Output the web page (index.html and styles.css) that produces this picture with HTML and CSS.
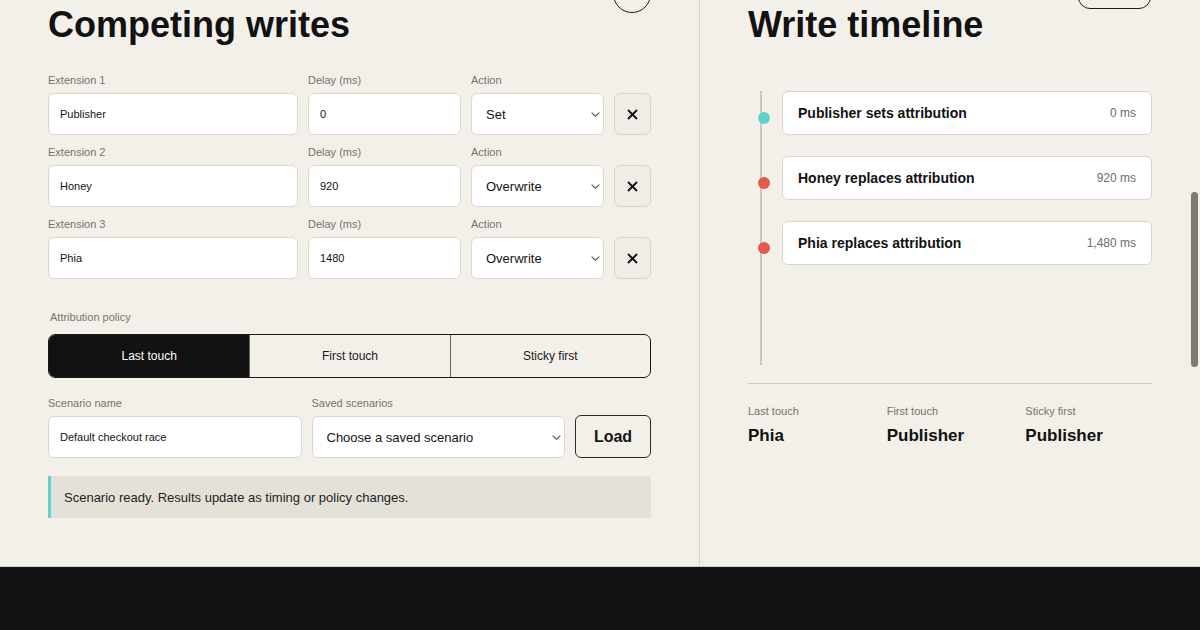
FILE: index.html
```html
<!DOCTYPE html>
<html lang="en">
<head>
<meta charset="utf-8">
<title>Competing writes</title>
<link rel="stylesheet" href="styles.css">
</head>
<body>
<main class="layout">
  <section class="panel panel--editor">
    <div class="panel-head">
      <h2 class="panel-title">Competing writes</h2>
      <button class="icon-btn" aria-label="Add extension">
        <svg width="14" height="14" viewBox="0 0 14 14"><path d="M7 1v12M1 7h12" stroke="#111" stroke-width="1.4" fill="none"/></svg>
      </button>
    </div>

    <div class="writes">
      <div class="write-row">
        <div class="field"><label>Extension 1</label><input class="input" value="Publisher"></div>
        <div class="field"><label>Delay (ms)</label><input class="input" value="0"></div>
        <div class="field"><label>Action</label>
          <div class="select-wrap">
            <select class="select"><option>Set</option><option>Overwrite</option></select>
            <svg class="chev" width="9" height="5" viewBox="0 0 9 5"><path d="M0.6 0.6l3.9 3.6 3.9-3.6" stroke="#555" stroke-width="1.1" fill="none"/></svg>
          </div>
        </div>
        <button class="remove-btn" aria-label="Remove">
          <svg width="11" height="11" viewBox="0 0 11 11"><path d="M1 1l9 9M10 1l-9 9" stroke="#111" stroke-width="1.9" fill="none"/></svg>
        </button>
      </div>

      <div class="write-row">
        <div class="field"><label>Extension 2</label><input class="input" value="Honey"></div>
        <div class="field"><label>Delay (ms)</label><input class="input" value="920"></div>
        <div class="field"><label>Action</label>
          <div class="select-wrap">
            <select class="select"><option>Overwrite</option><option>Set</option></select>
            <svg class="chev" width="9" height="5" viewBox="0 0 9 5"><path d="M0.6 0.6l3.9 3.6 3.9-3.6" stroke="#555" stroke-width="1.1" fill="none"/></svg>
          </div>
        </div>
        <button class="remove-btn" aria-label="Remove">
          <svg width="11" height="11" viewBox="0 0 11 11"><path d="M1 1l9 9M10 1l-9 9" stroke="#111" stroke-width="1.9" fill="none"/></svg>
        </button>
      </div>

      <div class="write-row">
        <div class="field"><label>Extension 3</label><input class="input" value="Phia"></div>
        <div class="field"><label>Delay (ms)</label><input class="input" value="1480"></div>
        <div class="field"><label>Action</label>
          <div class="select-wrap">
            <select class="select"><option>Overwrite</option><option>Set</option></select>
            <svg class="chev" width="9" height="5" viewBox="0 0 9 5"><path d="M0.6 0.6l3.9 3.6 3.9-3.6" stroke="#555" stroke-width="1.1" fill="none"/></svg>
          </div>
        </div>
        <button class="remove-btn" aria-label="Remove">
          <svg width="11" height="11" viewBox="0 0 11 11"><path d="M1 1l9 9M10 1l-9 9" stroke="#111" stroke-width="1.9" fill="none"/></svg>
        </button>
      </div>
    </div>

    <div class="policy" role="radiogroup" aria-label="Attribution policy">
      <div class="policy-label">Attribution policy</div>
      <div class="segmented">
        <button class="seg is-active">Last touch</button>
        <button class="seg">First touch</button>
        <button class="seg">Sticky first</button>
      </div>
    </div>

    <div class="scenario-row">
      <div class="field"><label>Scenario name</label><input class="input" value="Default checkout race"></div>
      <div class="field"><label>Saved scenarios</label>
        <div class="select-wrap">
          <select class="select"><option>Choose a saved scenario</option></select>
          <svg class="chev" width="9" height="5" viewBox="0 0 9 5"><path d="M0.6 0.6l3.9 3.6 3.9-3.6" stroke="#555" stroke-width="1.1" fill="none"/></svg>
        </div>
      </div>
      <button class="load-btn">Load</button>
    </div>

    <div class="status">Scenario ready. Results update as timing or policy changes.</div>
  </section>

  <section class="panel panel--timeline">
    <div class="panel-head">
      <h2 class="panel-title">Write timeline</h2>
      <button class="ghost-btn" aria-label="Replay"></button>
    </div>

    <div class="timeline">
      <div class="event">
        <span class="dot dot--set"></span>
        <div class="card"><span class="card-title">Publisher sets attribution</span><span class="card-time">0 ms</span></div>
      </div>
      <div class="event">
        <span class="dot dot--replace"></span>
        <div class="card"><span class="card-title">Honey replaces attribution</span><span class="card-time">920 ms</span></div>
      </div>
      <div class="event">
        <span class="dot dot--replace"></span>
        <div class="card"><span class="card-title">Phia replaces attribution</span><span class="card-time">1,480 ms</span></div>
      </div>
    </div>

    <div class="results">
      <div class="result"><div class="result-label">Last touch</div><div class="result-value">Phia</div></div>
      <div class="result"><div class="result-label">First touch</div><div class="result-value">Publisher</div></div>
      <div class="result"><div class="result-label">Sticky first</div><div class="result-value">Publisher</div></div>
    </div>
  </section>
</main>
<footer class="footer"></footer>
<div class="scroll-thumb"></div>
</body>
</html>
```

FILE: styles.css
```css
* { box-sizing: border-box; }

html, body {
  margin: 0;
  height: 100%;
}

body {
  background: #f3f0ea;
  color: #141414;
  font-family: "Liberation Sans", Arial, Helvetica, sans-serif;
  overflow: hidden;
}

button, input, select {
  font-family: inherit;
  color: inherit;
}

.layout {
  display: grid;
  grid-template-columns: 700px 500px;
  margin-top: -25px;
  border-bottom: 1px solid #d2cec6;
}

.panel {
  padding: 0 48px 48px;
}

.panel--editor {
  border-right: 1px solid #d8d3cb;
}

.panel-head {
  display: flex;
  justify-content: space-between;
  align-items: flex-start;
}

.panel-title {
  margin: 30px 0 0;
  font-size: 36px;
  line-height: 40px;
  font-weight: 700;
  color: #121212;
}

.icon-btn {
  width: 38px;
  height: 38px;
  border: 1px solid #1a1a1a;
  border-radius: 50%;
  background: transparent;
  padding: 0;
  display: flex;
  align-items: center;
  justify-content: center;
}

.ghost-btn {
  width: 73px;
  height: 34px;
  border: 1px solid #1a1a1a;
  border-radius: 12px;
  background: transparent;
  margin-right: 1px;
}

/* write rows */
.writes {
  margin-top: 28px;
  display: flex;
  flex-direction: column;
  gap: 10px;
}

.write-row {
  display: grid;
  grid-template-columns: 250px 153px 133px 37px;
  column-gap: 10px;
  align-items: end;
}

.field label {
  display: block;
  font-size: 11px;
  line-height: 14px;
  color: #77736c;
  margin-bottom: 6px;
}

.input {
  display: block;
  width: 100%;
  height: 42px;
  border: 1px solid #dcd8d0;
  border-radius: 6px;
  background: #fff;
  padding: 0 11px;
  font-size: 11px;
  color: #141414;
  outline: none;
}

.select-wrap {
  position: relative;
}

.select {
  display: block;
  width: 100%;
  height: 42px;
  appearance: none;
  -webkit-appearance: none;
  border: 1px solid #dcd8d0;
  border-radius: 6px;
  background: #fff;
  padding: 0 14px;
  font-size: 13px;
  color: #141414;
  outline: none;
}

.chev {
  position: absolute;
  right: 4px;
  top: 19px;
  pointer-events: none;
}

.remove-btn {
  height: 42px;
  width: 37px;
  padding: 0;
  border: 1px solid #d8d4cc;
  border-radius: 6px;
  background: #f0ede7;
  display: flex;
  align-items: center;
  justify-content: center;
}

/* policy */
.policy {
  margin-top: 31px;
}

.policy-label {
  font-size: 11px;
  line-height: 14px;
  color: #77736c;
  padding-left: 2px;
  margin-bottom: 10px;
}

.segmented {
  display: grid;
  grid-template-columns: repeat(3, 1fr);
  height: 44px;
  border: 1px solid #1a1a1a;
  border-radius: 7px;
  overflow: hidden;
}

.seg {
  border: 0;
  border-left: 1px solid #6b6761;
  background: transparent;
  font-size: 12px;
  color: #1a1a1a;
  padding: 0;
}

.seg:first-child {
  border-left: 0;
}

.seg.is-active {
  background: #121212;
  color: #fff;
}

/* scenario */
.scenario-row {
  margin-top: 18px;
  display: grid;
  grid-template-columns: 1fr 1fr 76px;
  column-gap: 10px;
  align-items: end;
}

.load-btn {
  height: 43px;
  border: 1.5px solid #2b2b2b;
  border-radius: 6px;
  background: transparent;
  font-weight: 700;
  font-size: 16px;
  color: #141414;
}

.status {
  margin-top: 18px;
  height: 42px;
  background: #e4e1d9;
  border-left: 3px solid #5fd3cb;
  padding-left: 13px;
  display: flex;
  align-items: center;
  font-size: 13px;
  color: #1e1e1e;
}

/* timeline */
.timeline {
  margin: 46px 0 0 12px;
  height: 274px;
  border-left: 2px solid #cdc8bf;
  padding-left: 20px;
  display: flex;
  flex-direction: column;
  gap: 21px;
  border-bottom: 0;
}

.event {
  display: flex;
  align-items: flex-start;
}

.dot {
  flex: none;
  width: 12px;
  height: 12px;
  border-radius: 50%;
  margin: 21px 12px 0 -24px;
}

.dot--set { background: #5dd3cc; }
.dot--replace { background: #e35a4b; }

.card {
  flex: 1;
  height: 44px;
  border: 1px solid #d9d5cd;
  border-radius: 6px;
  background: #fff;
  display: flex;
  justify-content: space-between;
  align-items: center;
  padding: 0 15px;
}

.card-title {
  font-size: 14px;
  font-weight: 700;
  color: #121212;
}

.card-time {
  font-size: 12px;
  color: #6f6b65;
}

.results {
  margin-top: 18px;
  border-top: 1px solid #cfcac2;
  padding-top: 20px;
  display: grid;
  grid-template-columns: repeat(3, 1fr);
  column-gap: 12px;
}

.result-label {
  font-size: 11px;
  line-height: 14px;
  color: #77736c;
  margin-bottom: 7px;
}

.result-value {
  font-size: 17px;
  line-height: 22px;
  font-weight: 700;
  color: #121212;
}

.footer {
  height: 63px;
  background: #111110;
}

.scroll-thumb {
  position: fixed;
  right: 2px;
  top: 192px;
  width: 7px;
  height: 175px;
  border-radius: 4px;
  background: #7f7a74;
}
```
